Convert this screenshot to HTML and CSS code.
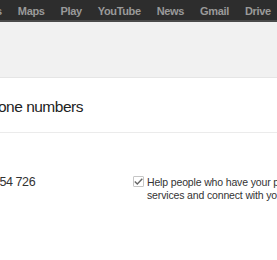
FILE: index.html
```html
<!DOCTYPE html>
<html lang="en">

<head>
    <meta charset="UTF-8">
    <title>Phone numbers</title>
    <link rel="stylesheet" href="styles.css">
</head>

<body>
    <div class="gbar">
        <a href="#">Images</a>
        <a href="#">Maps</a>
        <a href="#">Play</a>
        <a href="#">YouTube</a>
        <a href="#">News</a>
        <a href="#">Gmail</a>
        <a href="#">Drive</a>
        <a href="#">More</a>
    </div>

    <div class="subbar"></div>

    <div class="content">
        <h2 class="section-title">Phone numbers</h2>

        <div class="phone-row">
            <div class="phone-number">07700 954 726</div>
            <label class="share-option">
                <span class="check">
                    <svg width="9" height="7" viewBox="0 0 9 7">
                        <path d="M0.8 3.5 L3.3 6 L8.3 0.8" fill="none" stroke="#666" stroke-width="1.4"/>
                    </svg>
                </span>
                <span class="share-text">Help people who have your phone number find you across Google services and connect with you</span>
            </label>
        </div>
    </div>
</body>

</html>
```

FILE: styles.css
```css
* {
    box-sizing: border-box;
    margin: 0;
    padding: 0;
}

body {
    font-family: "Liberation Sans", Arial, sans-serif;
    background: #fff;
    width: 277px;
    overflow: hidden;
}

.gbar {
    height: 22px;
    background: #2d2d2d;
    border-bottom: 2px solid #4a4a4a;
    display: flex;
    white-space: nowrap;
    margin-left: -42px;
}

.gbar a {
    flex-shrink: 0;
    color: #9a9a9a;
    font-size: 11px;
    font-weight: bold;
    letter-spacing: -0.35px;
    text-decoration: none;
    padding: 0 8px;
    line-height: 22px;
}

.subbar {
    height: 56px;
    background: #f1f1f1;
    border-bottom: 1px solid #e5e5e5;
}

.content {
    margin-left: -20px;
    white-space: nowrap;
}

.section-title {
    font-size: 15.5px;
    font-weight: normal;
    letter-spacing: -0.5px;
    color: #222;
    line-height: 18px;
    padding: 20px 0 16px;
    border-bottom: 1px solid #ebebeb;
}

.phone-row {
    display: flex;
    align-items: flex-start;
    padding-top: 43px;
}

.phone-number {
    flex: 0 0 176px;
    margin-left: -23px;
    font-size: 12.5px;
    letter-spacing: -0.4px;
    line-height: 13px;
    color: #333;
}

.share-option {
    flex-shrink: 0;
    display: flex;
    align-items: flex-start;
    font-size: 10.5px;
    letter-spacing: -0.15px;
    color: #333;
}

.check {
    flex-shrink: 0;
    width: 11px;
    height: 11px;
    border: 1px solid #c6c6c6;
    border-radius: 1px;
    margin-right: 3px;
    display: flex;
    align-items: center;
    justify-content: center;
}

.share-text {
    white-space: normal;
    width: 330px;
    line-height: 12.5px;
}
```
